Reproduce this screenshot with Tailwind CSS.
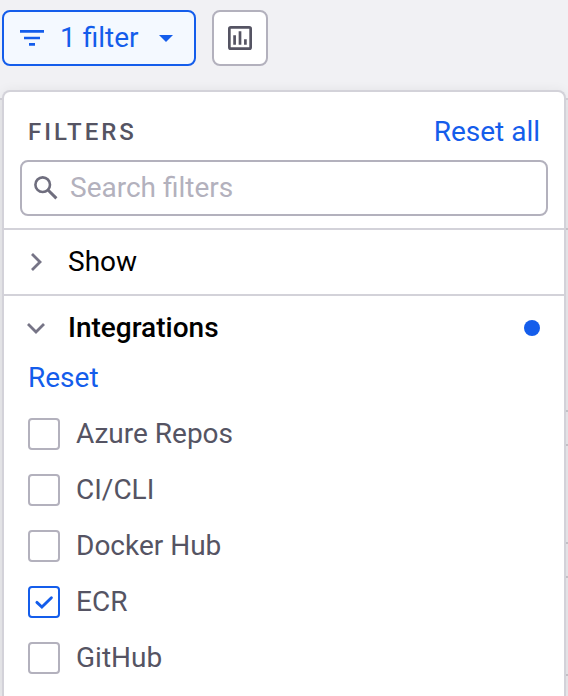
<!DOCTYPE html>
<html lang="en">
<head>
<meta charset="utf-8">
<title>Filters</title>
<script src="https://cdn.jsdelivr.net/npm/@tailwindcss/browser@4"></script>
</head>
<body class="h-[696px] w-[568px] overflow-hidden bg-[#f1f1f4] text-[28px] leading-8 text-[#555463] font-[Roboto,sans-serif]">
<div class="relative h-full overflow-hidden">
  <!-- table behind the panel -->
  <div class="absolute inset-x-0 top-[98px] bottom-0 border-t-2 border-[#d3d2d9] bg-[#e9e9ec]">
    <div class="absolute right-0 top-[128px] h-0.5 w-2 bg-[#c6c6cb]"></div>
    <div class="absolute right-0 top-[310px] h-9 w-2 border-y-2 border-[#c6c6cb]"></div>
    <div class="absolute right-0 top-[442px] h-9 w-2 border-y-2 border-[#c6c6cb]"></div>
    <div class="absolute right-0 top-[574px] h-9 w-2 border-y-2 border-[#c6c6cb]"></div>
  </div>

  <div class="relative flex h-full flex-col pt-[10px] pl-0.5">
    <div class="flex gap-4">
      <button class="flex h-14 w-[194px] items-center rounded-lg border-2 border-[#145deb] bg-[#f4f9ff] pl-4 text-[#145deb]">
        <svg class="size-6" viewBox="0 0 24 24" fill="currentColor"><path d="M0 4h24v2.7H0zM4 10.7h16v2.6H4zM9 17h6v2.7H9z"/></svg>
        <span class="ml-4 w-20 text-left whitespace-nowrap">1 filter</span>
        <svg class="ml-[19px] h-[7px] w-[14px]" viewBox="0 0 14 7" fill="currentColor"><path d="M0 0h14L7 7z"/></svg>
      </button>
      <button class="flex size-14 items-center justify-center rounded-lg border-2 border-[#b3b1bd] bg-white text-[#555463]">
        <svg class="size-6" viewBox="0 0 24 24" fill="none" stroke="currentColor" stroke-width="2.7"><rect x="1.35" y="1.35" width="21.3" height="21.3" rx="1.5"/><path d="M6.6 9.2v9.6M12 5.2v13.6M17.4 13.2v5.6"/></svg>
      </button>
    </div>

    <section class="mt-6 w-[564px] grow rounded-t-lg border-2 border-b-0 border-[#d3d2d9] bg-white shadow-[0_0_12px_rgba(0,0,0,0.06)]">
      <header class="flex h-[68px] items-center justify-between pt-3 pr-6 pl-6">
        <h2 class="text-[24px] font-medium tracking-[3px]">FILTERS</h2>
        <a class="text-[#145deb]">Reset all</a>
      </header>
      <div class="mx-4 flex h-14 items-center rounded-lg border-2 border-[#b3b1bd] pl-3 text-[#b3b1bd]">
        <svg class="size-6 text-[#6f6e7e]" viewBox="0 0 24 24" fill="none" stroke="currentColor" stroke-width="2.6"><circle cx="8.7" cy="8.7" r="7.3"/><path d="M14 14l8.4 8.4" stroke-width="3"/></svg>
        <span class="ml-3">Search filters</span>
      </div>
      <div class="mt-3 flex h-[68px] items-center border-y-2 border-[#d3d2d9] pl-5 text-black">
        <svg class="size-6 text-[#767486]" viewBox="0 0 24 24" fill="none" stroke="currentColor" stroke-width="2.8"><path d="M8 4l8 8-8 8"/></svg>
        <span class="ml-5">Show</span>
      </div>
      <div class="flex h-16 items-center pr-6 pl-5 text-black">
        <svg class="size-6 text-[#767486]" viewBox="0 0 24 24" fill="none" stroke="currentColor" stroke-width="2.8"><path d="M4 8l8 8 8-8"/></svg>
        <span class="ml-5 font-medium">Integrations</span>
        <span class="ml-auto size-4 rounded-full bg-[#145deb]"></span>
      </div>
      <div class="pl-6">
        <a class="mt-0.5 flex h-8 items-center text-[#145deb]">Reset</a>
        <ul class="mt-6 flex flex-col gap-6">
          <li class="flex h-8 items-center gap-4"><span class="size-8 rounded-sm border-2 border-[#b3b1bd]"></span>Azure Repos</li>
          <li class="flex h-8 items-center gap-4"><span class="size-8 rounded-sm border-2 border-[#b3b1bd]"></span>CI/CLI</li>
          <li class="flex h-8 items-center gap-4"><span class="size-8 rounded-sm border-2 border-[#b3b1bd]"></span>Docker Hub</li>
          <li class="flex h-8 items-center gap-4"><span class="flex size-8 items-center justify-center rounded-sm border-2 border-[#145deb] text-[#145deb]"><svg class="size-7" viewBox="0 0 28 28" fill="none" stroke="currentColor" stroke-width="2.9" stroke-linecap="round"><path d="M6.9 14.4l5 4.6L21.4 9.8"/></svg></span>ECR</li>
          <li class="flex h-8 items-center gap-4"><span class="size-8 rounded-sm border-2 border-[#b3b1bd]"></span>GitHub</li>
        </ul>
      </div>
    </section>
  </div>
</div>
</body>
</html>
